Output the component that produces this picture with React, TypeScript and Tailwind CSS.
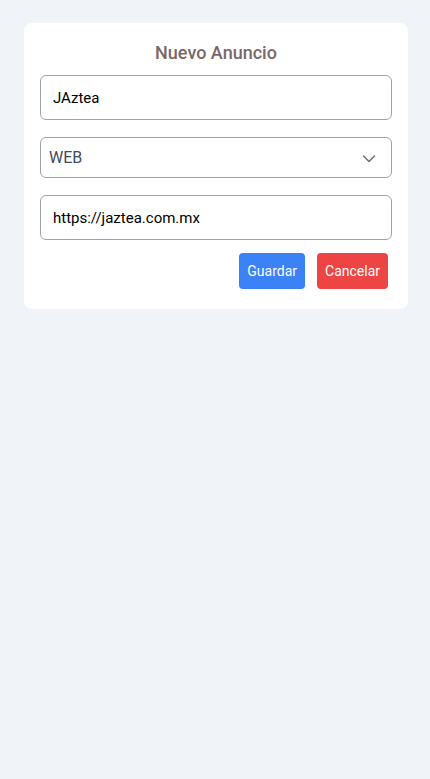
export default function App() {
  return (
    <div className="min-h-[779px] bg-[#f0f3f8] pl-6 pr-[22px] pt-[23px] font-['Roboto',sans-serif]">
      <div className="rounded-lg bg-white px-4 pt-4 pb-5">
        <h2 className="mb-2 text-center text-lg font-medium leading-[28px] text-[#7a6868]">
          Nuevo Anuncio
        </h2>
        <input
          defaultValue="JAztea"
          className="block h-[45px] w-full rounded-md border border-[#9ca3af] px-3 text-[15px] text-black outline-none"
        />
        <div className="relative mt-[17px]">
          <select
            defaultValue="WEB"
            className="block h-[41px] w-full appearance-none rounded-md border border-[#9ca3af] bg-white px-2 text-base text-[#3f4a5c] outline-none"
          >
            <option value="WEB">WEB</option>
            <option value="APP">APP</option>
          </select>
          <svg
            className="pointer-events-none absolute right-[13px] top-1/2 -translate-y-1/2"
            width="20"
            height="20"
            viewBox="0 0 20 20"
            fill="none"
            stroke="#6b7280"
            strokeWidth="1.6"
            strokeLinecap="round"
            strokeLinejoin="round"
          >
            <path d="M4.5 8l5.5 5.5 5.5-5.5" />
          </svg>
        </div>
        <input
          defaultValue="https://jaztea.com.mx"
          className="mt-[17px] block h-[45px] w-full rounded-md border border-[#9ca3af] px-3 text-[15px] text-black outline-none"
        />
        <div className="mt-[13px] flex justify-end gap-3 pr-1">
          <button className="h-9 rounded bg-[#3b82f6] px-2 text-sm text-white">Guardar</button>
          <button className="h-9 rounded bg-[#ef4444] px-2 text-sm text-white">Cancelar</button>
        </div>
      </div>
    </div>
  );
}
